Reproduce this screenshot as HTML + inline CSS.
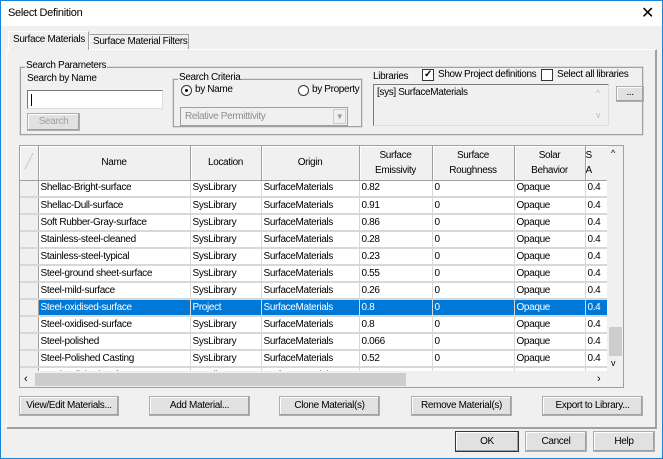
<!DOCTYPE html>
<html><head><style>
*{box-sizing:border-box;margin:0;padding:0}
body{width:663px;height:459px;overflow:hidden;background:#f0f0f0;font-family:"Liberation Sans",Arial,sans-serif;font-size:10px;letter-spacing:-0.35px;color:#000;position:relative;white-space:nowrap}
.a{position:absolute}
.win{left:0;top:0;width:663px;height:459px;border:1px solid #1883d7}
.title{left:1px;top:1px;width:661px;height:25px;background:#fff}
.btn{position:absolute;background:#e1e1e1;border:1px solid #adadad;text-align:center;line-height:18px;box-shadow:inset -1px -1px 0 #a0a0a0, inset 1px 1px 0 #fff}
.fs{position:absolute;border:1px solid #dcdcdc;outline:1px solid #a0a0a0;outline-offset:-2px}
.lg{position:absolute;background:#f0f0f0;padding:0 1px;line-height:12px}
table{border-collapse:collapse;table-layout:fixed}
td{height:17px;border-right:1px solid #d8d8d8;border-bottom:2px solid #d8d8d8;padding:0 2px;white-space:nowrap;overflow:hidden;background:#fff;line-height:14px}
td.rh{background:#f0f0f0;border-right:1px solid #a0a0a0}
tr.sel td{background:#0078d7;color:#fff}
tr.sel td.rh{background:#f0f0f0}
th{height:34px;font-weight:normal;background:#f0f0f0;border-right:1px solid #a0a0a0;border-bottom:1px solid #a0a0a0;text-align:center;line-height:15px;box-shadow:inset 1px 1px 0 #fff;overflow:hidden;white-space:nowrap}
</style></head><body>
<div class="a win"></div>
<div class="a title"></div>
<div class="a" style="left:8px;top:7px;font-size:11px;letter-spacing:-0.3px">Select Definition</div>
<div class="a" style="left:641px;top:3px;font-size:16px;font-weight:300">✕</div>

<div class="a" style="left:6px;top:49px;width:651px;height:380px;border:1px solid #a0a0a0;border-top-color:#fff;border-left-color:#fff;box-shadow:inset -1px -1px 0 #a0a0a0"></div>
<div class="a" style="left:89px;top:34px;width:100px;height:15px;border:1px solid #a0a0a0;border-bottom:none;border-left:1px solid #fff;padding-left:3px;line-height:13px">Surface Material Filters</div>
<div class="a" style="left:8px;top:31px;width:81px;height:19px;border-top:1px solid #fff;border-left:1px solid #fff;border-right:1px solid #a0a0a0;background:#f0f0f0;padding-left:4px;line-height:16px">Surface Materials</div>

<div class="fs" style="left:19px;top:66px;width:625px;height:70px"></div>
<div class="lg" style="left:25px;top:60px">Search Parameters</div>
<div class="a" style="left:27px;top:73px">Search by Name</div>
<div class="a" style="left:27px;top:90px;width:136px;height:19px;background:#fff;border:1px solid #7a7a7a;border-bottom-color:#ddd;border-right-color:#ddd"><div class="a" style="left:3px;top:3px;width:1px;height:12px;background:#000"></div></div>
<div class="btn" style="left:27px;top:113px;width:53px;height:18px;color:#a0a0a0;line-height:16px">Search</div>

<div class="fs" style="left:172px;top:78px;width:191px;height:50px"></div>
<div class="lg" style="left:178px;top:72px">Search Criteria</div>
<div class="a" style="left:181px;top:85px;width:11px;height:11px;border-radius:50%;border:1px solid #333;background:#fff"><div class="a" style="left:3px;top:3px;width:3px;height:3px;border-radius:50%;background:#000"></div></div>
<div class="a" style="left:195px;top:84px">by Name</div>
<div class="a" style="left:298px;top:85px;width:11px;height:11px;border-radius:50%;border:1px solid #333;background:#fff"></div>
<div class="a" style="left:312px;top:84px">by Property</div>
<div class="a" style="left:180px;top:107px;width:168px;height:19px;border:1px solid #a0a0a0;background:#f0f0f0;color:#8d8d8d;padding:3px 4px">Relative Permittivity</div>
<div class="a" style="left:333px;top:109px;width:13px;height:15px;border:1px solid #ccc;color:#999;font-size:8px;text-align:center;line-height:14px">▼</div>

<div class="a" style="left:373px;top:71px">Libraries</div>
<div class="a" style="left:422px;top:69px;width:12px;height:12px;border:1px solid #333;background:#fff;font-size:10px;line-height:10px;text-align:center;font-weight:bold">✓</div>
<div class="a" style="left:438px;top:69px">Show Project definitions</div>
<div class="a" style="left:541px;top:69px;width:12px;height:12px;border:1px solid #333;background:#fff"></div>
<div class="a" style="left:557px;top:69px">Select all libraries</div>
<div class="a" style="left:373px;top:84px;width:236px;height:42px;border:1px solid #7a7a7a;border-bottom-color:#ddd;border-right-color:#ddd;padding:2px 3px">[sys] SurfaceMaterials</div>
<div class="a" style="left:596px;top:88px;color:#bbb;font-size:9px">^</div>
<div class="a" style="left:596px;top:110px;color:#bbb;font-size:9px">v</div>
<div class="btn" style="left:616px;top:86px;width:28px;height:16px;line-height:12px">...</div>

<div class="a" style="left:19px;top:145px;width:605px;height:243px;border:1px solid #a0a0a0;background:#fff;overflow:hidden">
<table style="width:588px">
<colgroup><col style="width:18px"><col style="width:152px"><col style="width:71px"><col style="width:98px"><col style="width:73px"><col style="width:82px"><col style="width:71px"><col style="width:23px"></colgroup>
<tr><th><span style="color:#ccc;font-size:14px">╱</span></th><th>Name</th><th>Location</th><th>Origin</th><th>Surface<br>Emissivity</th><th>Surface<br>Roughness</th><th>Solar<br>Behavior</th><th style="text-align:left">S<br>A</th></tr>
<tr><td class="rh"></td><td>Shellac-Bright-surface</td><td>SysLibrary</td><td>SurfaceMaterials</td><td>0.82</td><td>0</td><td>Opaque</td><td>0.4</td></tr>
<tr><td class="rh"></td><td>Shellac-Dull-surface</td><td>SysLibrary</td><td>SurfaceMaterials</td><td>0.91</td><td>0</td><td>Opaque</td><td>0.4</td></tr>
<tr><td class="rh"></td><td>Soft Rubber-Gray-surface</td><td>SysLibrary</td><td>SurfaceMaterials</td><td>0.86</td><td>0</td><td>Opaque</td><td>0.4</td></tr>
<tr><td class="rh"></td><td>Stainless-steel-cleaned</td><td>SysLibrary</td><td>SurfaceMaterials</td><td>0.28</td><td>0</td><td>Opaque</td><td>0.4</td></tr>
<tr><td class="rh"></td><td>Stainless-steel-typical</td><td>SysLibrary</td><td>SurfaceMaterials</td><td>0.23</td><td>0</td><td>Opaque</td><td>0.4</td></tr>
<tr><td class="rh"></td><td>Steel-ground sheet-surface</td><td>SysLibrary</td><td>SurfaceMaterials</td><td>0.55</td><td>0</td><td>Opaque</td><td>0.4</td></tr>
<tr><td class="rh"></td><td>Steel-mild-surface</td><td>SysLibrary</td><td>SurfaceMaterials</td><td>0.26</td><td>0</td><td>Opaque</td><td>0.4</td></tr>
<tr class="sel"><td class="rh"></td><td>Steel-oxidised-surface</td><td>Project</td><td>SurfaceMaterials</td><td>0.8</td><td>0</td><td>Opaque</td><td>0.4</td></tr>
<tr><td class="rh"></td><td>Steel-oxidised-surface</td><td>SysLibrary</td><td>SurfaceMaterials</td><td>0.8</td><td>0</td><td>Opaque</td><td>0.4</td></tr>
<tr><td class="rh"></td><td>Steel-polished</td><td>SysLibrary</td><td>SurfaceMaterials</td><td>0.066</td><td>0</td><td>Opaque</td><td>0.4</td></tr>
<tr><td class="rh"></td><td>Steel-Polished Casting</td><td>SysLibrary</td><td>SurfaceMaterials</td><td>0.52</td><td>0</td><td>Opaque</td><td>0.4</td></tr>
<tr><td class="rh"></td><td>Steel-Polished surface</td><td>SysLibrary</td><td>SurfaceMaterials</td><td>0.2</td><td>0</td><td>Opaque</td><td>0.4</td></tr>
</table>
<div class="a" style="left:587px;top:0;width:17px;height:225px;background:#f0f0f0"></div>
<div class="a" style="left:591px;top:2px;font-size:9px">^</div>
<div class="a" style="left:591px;top:212px;font-size:9px">v</div>
<div class="a" style="left:589px;top:181px;width:13px;height:29px;background:#cdcdcd"></div>
<div class="a" style="left:0;top:225px;width:604px;height:17px;background:#f0f0f0"></div>
<div class="a" style="left:4px;top:227px;font-size:11px">‹</div>
<div class="a" style="left:577px;top:227px;font-size:11px">›</div>
<div class="a" style="left:15px;top:227px;width:371px;height:13px;background:#cdcdcd"></div>
</div>

<div class="btn" style="left:19px;top:396px;width:100px;height:20px">View/Edit Materials...</div>
<div class="btn" style="left:149px;top:396px;width:101px;height:20px">Add Material...</div>
<div class="btn" style="left:279px;top:396px;width:101px;height:20px">Clone Material(s)</div>
<div class="btn" style="left:411px;top:396px;width:101px;height:20px">Remove Material(s)</div>
<div class="btn" style="left:542px;top:396px;width:101px;height:20px">Export to Library...</div>

<div class="btn" style="left:455px;top:431px;width:64px;height:21px;line-height:19px;border:1px solid #333">OK</div>
<div class="btn" style="left:525px;top:431px;width:62px;height:21px;line-height:19px">Cancel</div>
<div class="btn" style="left:593px;top:431px;width:62px;height:21px;line-height:19px">Help</div>
</body></html>
